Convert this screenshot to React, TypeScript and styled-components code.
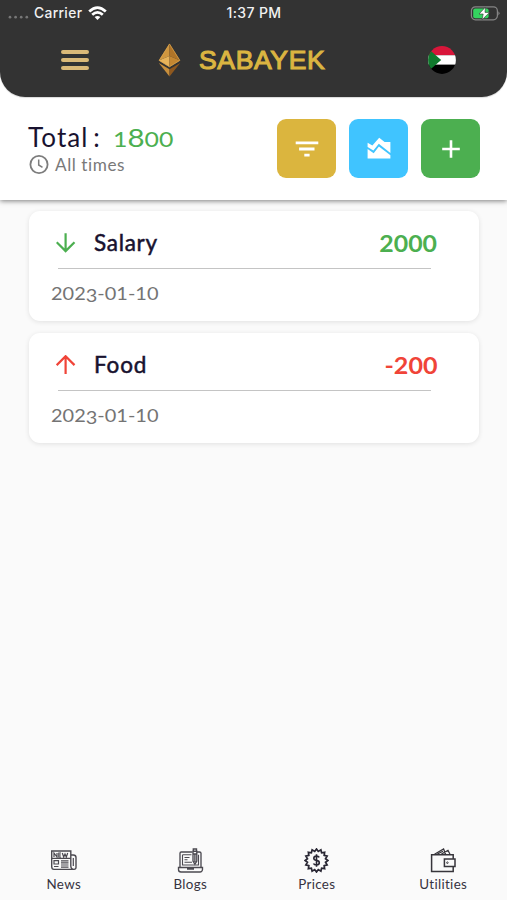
import React from "react";
import styled, { createGlobalStyle } from "styled-components";

const GlobalStyle = createGlobalStyle`
  * { box-sizing: border-box; }
  html, body { margin: 0; background: #fafafa; }
  body { font-family: Lato, "Open Sans", sans-serif; color: #18122f; overflow: hidden; }
  svg { display: block; flex: none; }
`;

const Screen = styled.div`
  width: 507px;
  height: 900px;
  display: flex;
  flex-direction: column;
  background: #fafafa;
`;

const Top = styled.div`
  background: #fff;
  height: 200px;
  flex: none;
  box-shadow: 0 1px 5px rgba(0, 0, 0, 0.5);
`;

const Header = styled.header`
  height: 97px;
  background: #333;
  border-radius: 0 0 25px 25px;
  box-shadow: 0 1px 1px rgba(0, 0, 0, 0.15);
`;

const StatusBar = styled.div`
  height: 27px;
  padding: 0 7px 0 8px;
  display: grid;
  grid-template-columns: 1fr auto 1fr;
  align-items: center;
  color: #f1f1f1;
  font: 500 13.8px/27px Inter, sans-serif;
  letter-spacing: 0.35px;
`;

const Time = styled.span`
  font-size: 14px;
  line-height: 26px;
  height: 27px;
`;

const Signal = styled.div`
  display: flex;
  align-items: center;
  height: 27px;
`;

const Carrier = styled.span`
  margin: 0 6px 0 5px;
`;

const Battery = styled.div`
  justify-self: end;
`;

const Nav = styled.div`
  height: 66px;
  display: flex;
  align-items: center;
  padding: 0 51px 0 61px;
`;

const Burger = styled.div`
  width: 28px;
  display: grid;
  gap: 3.4px;
`;

const BurgerLine = styled.span`
  height: 4.4px;
  border-radius: 2px;
  background: #dbb978;
`;

const Brand = styled.div`
  display: flex;
  align-items: center;
  gap: 18px;
  margin-left: 69px;
  flex: 1;
`;

const BrandName = styled.span`
  font: 400 26.5px/30px "Liberation Sans", Arial, sans-serif;
  color: #dbb541;
  -webkit-text-stroke: 1.1px #dbb541;
  letter-spacing: 0.65px;
`;

const Summary = styled.section`
  height: 103px;
  padding: 22px 27px 0 28px;
  display: flex;
  justify-content: space-between;
`;

const TotalLine = styled.div`
  display: flex;
  align-items: baseline;
  height: 34px;
  padding-top: 1px;
  line-height: 34px;
  font-size: 26px;
`;

const TotalLabel = styled.span`
  width: 85px;
  letter-spacing: 1.1px;
  word-spacing: -3px;
`;

const Period = styled.div`
  display: flex;
  align-items: center;
  gap: 6px;
  height: 22px;
  font-size: 17.2px;
  letter-spacing: 0.55px;
  color: #797979;
`;

const Actions = styled.div`
  display: flex;
  gap: 13px;
`;

const Action = styled.button<{ $color: string }>`
  width: 59px;
  height: 59px;
  border: 0;
  padding: 0;
  border-radius: 9px;
  background: ${(p) => p.$color};
  display: grid;
  place-items: center;
`;

const Figure = styled.span<{ $size: number; $color: string; $stretch: number; $bold?: boolean; $end?: boolean }>`
  display: inline-block;
  white-space: nowrap;
  font-size: ${(p) => p.$size}px;
  font-weight: ${(p) => (p.$bold ? 700 : 400)};
  color: ${(p) => p.$color};
  transform: scaleX(${(p) => p.$stretch});
  transform-origin: ${(p) => (p.$end ? "right" : "left")} center;
`;

const TallDigit = styled.span`
  font-size: 1.19em;
  line-height: 0;
`;

const LowDigit = styled.span`
  display: inline-block;
  transform: translateY(0.14em);
`;

const List = styled.main`
  flex: 1;
  padding: 11px 28px 0 29px;
  display: flex;
  flex-direction: column;
  gap: 12px;
`;

const Card = styled.article`
  height: 110px;
  padding: 0 42px 0 22px;
  border-radius: 11px;
  background: #fff;
  box-shadow: 0 1px 5px rgba(0, 0, 0, 0.1);
`;

const CardHead = styled.div`
  height: 57px;
  padding: 7px 0 0 5px;
  display: flex;
  align-items: center;
`;

const Name = styled.span<{ $spacing: number }>`
  margin-left: 18px;
  flex: 1;
  font-size: 22.5px;
  line-height: 28px;
  color: #18122f;
  -webkit-text-stroke: 0.5px #18122f;
  letter-spacing: ${(p) => p.$spacing}px;
`;

const Rule = styled.div`
  height: 1px;
  margin: 0 6px 0 7px;
  background: #c4c4c4;
`;

const DateRow = styled.div`
  height: 50px;
  line-height: 50px;
`;

const Tabs = styled.nav`
  height: 60px;
  display: grid;
  grid-template-columns: repeat(4, 126.5px);
  padding-left: 0.5px;
`;

const Tab = styled.div`
  display: flex;
  flex-direction: column;
  align-items: center;
  padding-top: 8px;
  gap: 2px;
  font-size: 13.4px;
  line-height: 18px;
  letter-spacing: 0.32px;
  color: #37333f;
`;

const oldStyle = (value: string) =>
  value.split("").map((c, i) => {
    if (c === "8") return <TallDigit key={i}>{c}</TallDigit>;
    if (c === "3") return <LowDigit key={i}>{c}</LowDigit>;
    return c;
  });

const DotsIcon = () => (
  <svg width="21" height="11" viewBox="0 0 21 11" fill="#777">
    {[2, 7.6, 13.2, 18.8].map((x) => <circle key={x} cx={x} cy="9.2" r="1.35" />)}
  </svg>
);

const WifiIcon = () => (
  <svg width="19" height="15" viewBox="0 0 19 15" fill="none" stroke="#fff" strokeWidth="2.7">
    <path d="M1.2 5.5Q9.5 -2.4 17.8 5.5" />
    <path d="M4.2 8.8Q9.5 3.8 14.8 8.8" />
    <path d="M9.5 14 6.6 11.1Q9.5 8.7 12.4 11.1Z" fill="#fff" stroke="none" />
  </svg>
);

const BatteryIcon = () => (
  <svg width="30" height="15" viewBox="0 0 30 15">
    <rect x="1.4" y="0.8" width="26" height="13" rx="4" fill="none" stroke="#858585" strokeWidth="1.2" />
    <path d="M28.4 5.2Q30.7 7.3 28.4 9.5Z" fill="#858585" />
    <rect x="3.2" y="2.6" width="15.4" height="9.6" rx="2" fill="#34d35f" />
    <path d="M15.4 1.2 9 8H13.2L12 13.8 19.6 6.4H15Z" fill="#fff" stroke="#333" strokeWidth="0.6" />
  </svg>
);

const EtherIcon = () => (
  <svg width="23" height="34" viewBox="0 0 23 34">
    <path d="M11.5 0.5 0.8 17.5 11.5 13Z" fill="#cf963f" />
    <path d="M11.5 0.5 22.2 17.5 11.5 13Z" fill="#b07428" />
    <path d="M0.8 17.5 11.5 13V24Z" fill="#e7b35a" />
    <path d="M22.2 17.5 11.5 13V24Z" fill="#c58731" />
    <path d="M0.8 20 11.5 26.2V33.5Z" fill="#c88f3c" />
    <path d="M22.2 20 11.5 26.2V33.5Z" fill="#8f581e" />
    <path d="M11.5 1 1.2 17.4 11.5 23.8 21.8 17.4Z" fill="none" stroke="#dca64d" strokeWidth="0.7" />
  </svg>
);

const FlagIcon = () => (
  <svg width="28" height="28" viewBox="0 0 28 28">
    <defs><clipPath id="disc"><circle cx="14" cy="14" r="13.9" /></clipPath></defs>
    <g clipPath="url(#disc)">
      <path fill="#d8163a" d="M0 0H28V9.3H0Z" />
      <path fill="#fff" d="M0 9.3H28V18.7H0Z" />
      <path fill="#000" d="M0 18.7H28V28H0Z" />
      <path fill="#107a2d" d="M0 2.5 13.2 14 0 25.5Z" />
    </g>
  </svg>
);

const ClockIcon = () => (
  <svg width="21" height="21" viewBox="0 0 21 21" fill="none" stroke="#7d7d7d" strokeWidth="1.8">
    <circle cx="11" cy="10.5" r="8.6" />
    <path d="M10.7 5.5V11L14.5 13.4" strokeWidth="1.5" />
  </svg>
);

const FilterIcon = () => (
  <svg width="24" height="24" viewBox="0 0 24 24" fill="#fff">
    <path d="M.7 4.4H23.3V7.2H.7ZM4.1 10.6H19.5V13.4H4.1ZM9.3 16.7H14.6V19.5H9.3Z" />
  </svg>
);

const ChartIcon = () => (
  <svg width="24" height="24" viewBox="0 0 24 24" fill="#fff">
    <path d="M.6 5.8 5.4 8.4 12.2.8 17.6 5H23.4V16L11.8 6.8 6.4 13.5.6 10Z" />
    <path d="M.6 12 6.7 16.3 11.9 9.6 23.4 18.2V21.6H.6Z" />
  </svg>
);

const PlusIcon = () => (
  <svg width="20" height="20" viewBox="0 0 20 20" fill="none" stroke="#fff" strokeWidth="2.6">
    <path d="M10 1.2V18.8M1.2 10H18.8" />
  </svg>
);

const ArrowIcon = ({ up }: { up?: boolean }) => (
  <svg width="20" height="20" viewBox="0 0 20 20" fill="none" stroke={up ? "#f04438" : "#4caf50"} strokeWidth="2.2">
    <path d={up ? "M9.6 19V1.3M.7 10.1 9.6 1.2 18.5 10.1" : "M9.6.3V18M.7 9.2 9.6 18.1 18.5 9.2"} />
  </svg>
);

const NewsIcon = () => (
  <svg width="28" height="25" viewBox="0 0 28 25" fill="none" stroke="#4b4950" strokeWidth="1.2">
    <path d="M2.2 3H20.8V18Q21 21.4 24 21.4H4Q1.7 21.4 1.7 18.5V3ZM21 7H23.2Q26 7 26 9.5V18.5Q26.3 21.4 24 21.4" strokeWidth="1.4" />
    <path d="M2 10.4H21M4 9V5L7 9V5M11 5H8.8V9H11M8.8 7H11M12.3 5 13.7 9 15 6 16.3 9 17.7 5" />
    <path d="M4 12.6H8.5V16H4ZM11 12.8H18.5M11 14.9H18.5M11 17H18.5M4 18.5H8.5M11 19.1H18.5M23.3 10V18" />
  </svg>
);

const BlogIcon = () => (
  <svg width="27" height="25" viewBox="0 0 27 25" fill="none" stroke="#4b4950" strokeWidth="1.35">
    <path d="M15.5 4H4.2Q3 4 3 5.2V19.5H24V5.2Q24 4 22.5 4H20M1.5 19.5H25.5V21.5Q25.2 24 23 24H4Q1.5 24 1.5 21.5ZM10 21H17" />
    <path d="M5.5 6.8H14.5M5.5 6.8V17H21.5V6.8M7.5 9.5H12.5M7.5 11.8H10.5M7.5 14.2H15" strokeWidth="1.1" />
    <path d="M16 3.2H19.8V13L17.9 16.2 16 13ZM16 6H19.8M17.9 6V14M16.3 3V1H19.5V3" />
  </svg>
);

const starPoints = Array.from({ length: 32 }, (_, i) => {
  const r = i % 2 ? 9.2 : 11.5;
  const a = (i * Math.PI) / 16;
  return `${(12.5 + r * Math.sin(a)).toFixed(2)},${(12.5 - r * Math.cos(a)).toFixed(2)}`;
}).join(" ");

const PriceIcon = () => (
  <svg width="25" height="25" viewBox="0 0 25 25" fill="none" stroke="#282633" strokeWidth="1.7">
    <polygon points={starPoints} />
    <path d="M15.3 9.4Q14.5 8.1 12.5 8.1 9.8 8.1 9.8 10.2 9.8 12 12.5 12.4 15.3 12.8 15.3 14.8 15.3 17 12.5 17 10.2 17 9.5 15.5M12.5 6.2V18.8" strokeWidth="1.6" />
  </svg>
);

const WalletIcon = () => (
  <svg width="27" height="25" viewBox="0 0 27 25" fill="none" stroke="#37353b" strokeWidth="1.5">
    <path d="M23.2 11V6.7H1.6V23.4H23.2V18.5M14.4 11H25V18.5H14.4Z" />
    <path d="M4.5 6.3 13.6 1 15.6 6.3M7.4 6 13 3.3M11.4 6 18 2.4 20 6.3" strokeWidth="1.2" />
    <circle cx="17.4" cy="14.7" r="0.8" strokeWidth="0.9" />
  </svg>
);

const entries = [
  { name: "Salary", amount: "2000", date: "2023-01-10", spending: false, spacing: 0.7, stretch: 1.13 },
  { name: "Food", amount: "-200", date: "2023-01-10", spending: true, spacing: 0.85, stretch: 1.14 },
];

const tabs = [
  { label: "News", Icon: NewsIcon },
  { label: "Blogs", Icon: BlogIcon },
  { label: "Prices", Icon: PriceIcon },
  { label: "Utilities", Icon: WalletIcon },
];

export default function App() {
  return (
    <Screen>
      <GlobalStyle />
      <Top>
        <Header>
          <StatusBar>
            <Signal><DotsIcon /><Carrier>Carrier</Carrier><WifiIcon /></Signal>
            <Time>1:37 PM</Time>
            <Battery><BatteryIcon /></Battery>
          </StatusBar>
          <Nav>
            <Burger><BurgerLine /><BurgerLine /><BurgerLine /></Burger>
            <Brand><EtherIcon /><BrandName>SABAYEK</BrandName></Brand>
            <FlagIcon />
          </Nav>
        </Header>
        <Summary>
          <div>
            <TotalLine>
              <TotalLabel>Total :</TotalLabel>
              <Figure $size={21.8} $color="#4caf50" $stretch={1.14}>{oldStyle("1800")}</Figure>
            </TotalLine>
            <Period><ClockIcon />All times</Period>
          </div>
          <Actions>
            <Action $color="#dbb53e" aria-label="Filter"><FilterIcon /></Action>
            <Action $color="#40c4ff" aria-label="Chart"><ChartIcon /></Action>
            <Action $color="#4caf50" aria-label="Add"><PlusIcon /></Action>
          </Actions>
        </Summary>
      </Top>
      <List>
        {entries.map((e) => (
          <Card key={e.name}>
            <CardHead>
              <ArrowIcon up={e.spending} />
              <Name $spacing={e.spacing}>{e.name}</Name>
              <Figure $size={22} $color={e.spending ? "#f04438" : "#4caf50"} $stretch={e.stretch} $bold $end>{e.amount}</Figure>
            </CardHead>
            <Rule />
            <DateRow>
              <Figure $size={17.5} $color="#747474" $stretch={1.14}>{oldStyle(e.date)}</Figure>
            </DateRow>
          </Card>
        ))}
      </List>
      <Tabs>
        {tabs.map(({ label, Icon }) => (
          <Tab key={label}><Icon />{label}</Tab>
        ))}
      </Tabs>
    </Screen>
  );
}
